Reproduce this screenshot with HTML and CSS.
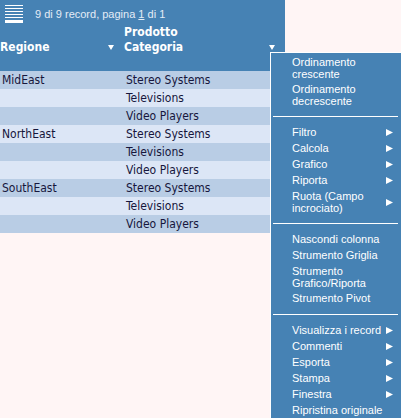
FILE: index.html
```html
<!DOCTYPE html>
<html lang="it">
<head>
    <meta charset="UTF-8">
    <title>Griglia</title>
    <link rel="stylesheet" href="styles.css">
</head>
<body>
    <div class="grid">
        <div class="toolbar">
            <svg class="menu-icon" width="18" height="18" viewBox="0 0 18 18">
                <rect x="0" y="0" width="18" height="1" fill="#fff"/>
                <rect x="0" y="3" width="18" height="1" fill="#fff"/>
                <rect x="0" y="6" width="18" height="1" fill="#fff"/>
                <rect x="0" y="9" width="18" height="1" fill="#fff"/>
                <rect x="0" y="12" width="18" height="1" fill="#fff"/>
                <rect x="0" y="15" width="18" height="3" fill="#fff"/>
            </svg>
            <span class="pager">9 di 9 record, pagina <u>1</u> di 1</span>
        </div>
        <div class="head">
            <div class="hcell col1">
                <span>Regione</span>
                <svg class="sort" width="6" height="5" viewBox="0 0 6 5"><polygon points="0,0 6,0 3,5" fill="#fff"/></svg>
            </div>
            <div class="hcell col2">
                <span>Prodotto<br>Categoria</span>
                <svg class="sort" width="6" height="5" viewBox="0 0 6 5"><polygon points="0,0 6,0 3,5" fill="#fff"/></svg>
            </div>
        </div>
        <div class="row dark"><div class="col1">MidEast</div><div class="col2">Stereo Systems</div></div>
        <div class="row"><div class="col1"></div><div class="col2">Televisions</div></div>
        <div class="row dark"><div class="col1"></div><div class="col2">Video Players</div></div>
        <div class="row"><div class="col1">NorthEast</div><div class="col2">Stereo Systems</div></div>
        <div class="row dark"><div class="col1"></div><div class="col2">Televisions</div></div>
        <div class="row"><div class="col1"></div><div class="col2">Video Players</div></div>
        <div class="row dark"><div class="col1">SouthEast</div><div class="col2">Stereo Systems</div></div>
        <div class="row"><div class="col1"></div><div class="col2">Televisions</div></div>
        <div class="row dark"><div class="col1"></div><div class="col2">Video Players</div></div>
    </div>

    <div class="popup">
        <div class="item two">Ordinamento<br>crescente</div>
        <div class="item two">Ordinamento<br>decrescente</div>
        <div class="sep"></div>
        <div class="item sub">Filtro <svg width="7" height="7" viewBox="0 0 7 7"><polygon points="0,0 7,3.5 0,7" fill="#fff"/></svg></div>
        <div class="item sub">Calcola <svg width="7" height="7" viewBox="0 0 7 7"><polygon points="0,0 7,3.5 0,7" fill="#fff"/></svg></div>
        <div class="item sub">Grafico <svg width="7" height="7" viewBox="0 0 7 7"><polygon points="0,0 7,3.5 0,7" fill="#fff"/></svg></div>
        <div class="item sub">Riporta <svg width="7" height="7" viewBox="0 0 7 7"><polygon points="0,0 7,3.5 0,7" fill="#fff"/></svg></div>
        <div class="item sub two"><span>Ruota (Campo<br>incrociato)</span> <svg width="7" height="7" viewBox="0 0 7 7"><polygon points="0,0 7,3.5 0,7" fill="#fff"/></svg></div>
        <div class="sep"></div>
        <div class="item">Nascondi colonna</div>
        <div class="item">Strumento Griglia</div>
        <div class="item two">Strumento<br>Grafico/Riporta</div>
        <div class="item">Strumento Pivot</div>
        <div class="sep"></div>
        <div class="item sub">Visualizza i record <svg width="7" height="7" viewBox="0 0 7 7"><polygon points="0,0 7,3.5 0,7" fill="#fff"/></svg></div>
        <div class="item sub">Commenti <svg width="7" height="7" viewBox="0 0 7 7"><polygon points="0,0 7,3.5 0,7" fill="#fff"/></svg></div>
        <div class="item sub">Esporta <svg width="7" height="7" viewBox="0 0 7 7"><polygon points="0,0 7,3.5 0,7" fill="#fff"/></svg></div>
        <div class="item sub">Stampa <svg width="7" height="7" viewBox="0 0 7 7"><polygon points="0,0 7,3.5 0,7" fill="#fff"/></svg></div>
        <div class="item sub">Finestra <svg width="7" height="7" viewBox="0 0 7 7"><polygon points="0,0 7,3.5 0,7" fill="#fff"/></svg></div>
        <div class="item">Ripristina originale</div>
    </div>
</body>
</html>
```

FILE: styles.css
```css
body {
    margin: 0;
    background-color: #fff5f5;
    overflow: hidden;
    height: 418px;
    position: relative;
}

.grid {
    width: 285px;
    font-family: "DejaVu Sans Condensed", "DejaVu Sans", sans-serif;
    font-size: 12px;
}

.toolbar {
    display: flex;
    align-items: flex-start;
    height: 27px;
    padding: 5px 0 0 5px;
    box-sizing: border-box;
    background-color: #4682b4;
}

.menu-icon {
    display: block;
}

.pager {
    margin-left: 12px;
    margin-top: 3px;
    font-family: "Liberation Sans", Arial, sans-serif;
    font-size: 11px;
    line-height: 13px;
    color: #e4ecf6;
}

.head {
    display: flex;
    height: 44px;
    background-color: #4682b4;
    color: #fff;
    font-weight: bold;
}

.hcell {
    display: flex;
    justify-content: space-between;
    align-items: flex-end;
    padding-bottom: 16px;
    line-height: 15px;
}

.hcell .sort {
    margin-bottom: 5px;
}

.hcell.col1 {
    width: 124px;
    padding-right: 10px;
    box-sizing: border-box;
}

.hcell.col2 {
    width: 161px;
    padding-right: 10px;
    box-sizing: border-box;
}

.row {
    display: flex;
    height: 18px;
    line-height: 18px;
    background-color: #dce6f6;
    color: #16163c;
}

.row.dark {
    background-color: #b9cde5;
}

.row .col1 {
    width: 126px;
    padding-left: 2px;
    box-sizing: border-box;
}

.row .col2 {
    width: 159px;
}

/* menu contestuale della colonna */
.popup {
    position: absolute;
    left: 270px;
    top: 52px;
    width: 131px;
    height: 366px;
    box-sizing: border-box;
    padding-top: 1px;
    background-color: #4682b4;
    border-top: 1px solid #fff;
    border-left: 1px solid #fff;
    font-family: "Liberation Sans", Arial, sans-serif;
    font-size: 11px;
    color: #fff;
}

.item {
    padding: 2px 8px 2px 21px;
    line-height: 12px;
}

.item.two {
    padding-bottom: 1px;
}

.item.sub {
    display: flex;
    justify-content: space-between;
    align-items: center;
}

.sep {
    height: 1px;
    margin: 8px 3px 7px 2px;
    background-color: #fff;
}
```
